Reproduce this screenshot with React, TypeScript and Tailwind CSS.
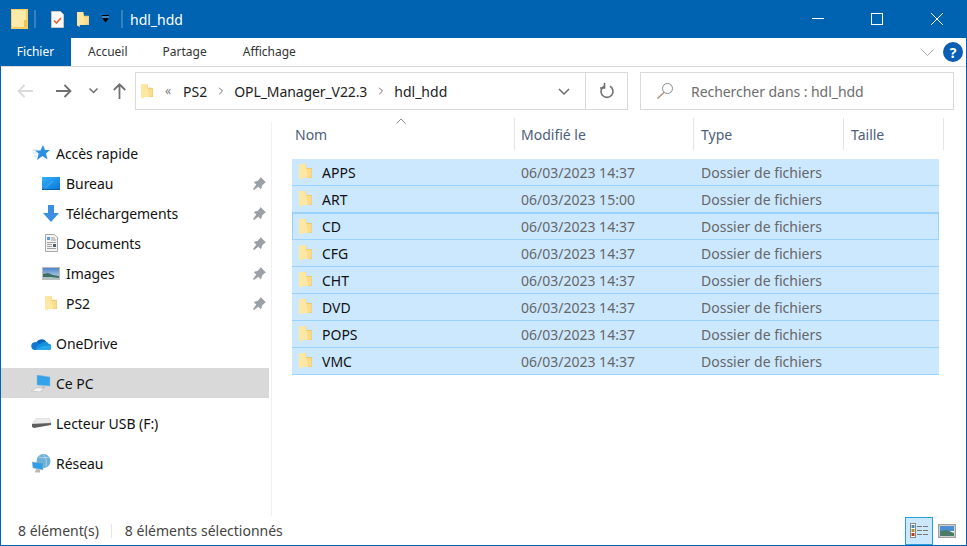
import { ChevronRight } from 'lucide-react';

const files = [
  { name: 'APPS', date: '06/03/2023 14:37' },
  { name: 'ART', date: '06/03/2023 15:00' },
  { name: 'CD', date: '06/03/2023 14:37', focused: true },
  { name: 'CFG', date: '06/03/2023 14:37' },
  { name: 'CHT', date: '06/03/2023 14:37' },
  { name: 'DVD', date: '06/03/2023 14:37' },
  { name: 'POPS', date: '06/03/2023 14:37' },
  { name: 'VMC', date: '06/03/2023 14:37' },
];

function FolderIcon({ className = 'w-[13px] h-[18px]' }: { className?: string }) {
  return (
    <svg viewBox="0 0 13 18" className={className}>
      <path d="M1 1h6l.5 4H13v10H8z" fill="#efc967" />
      <path d="M7 6h5.500v8.500H8z" fill="#f9dc8c" />
      <path d="M0 1h6.500L9 15H3v2L0 15.500z" fill="#fee7a2" />
    </svg>
  );
}

function PinIcon() {
  return (
    <svg viewBox="0 0 13 13" className="w-[13px] h-[13px]">
      <path d="M7.500 0L13 5.500l-1.300.4-2.700 2.600-.4 2.700-1 .8-2.200-2.300L1 13l-1-1 3.300-4.400L1 5.400l.8-1 2.700-.4L7.100 1.300z" fill="#9aa0a6" />
    </svg>
  );
}

function NavItem({ icon, label, pinned, active, indent }: { icon: React.ReactNode; label: string; pinned?: boolean; active?: boolean; indent?: boolean }) {
  return (
    <div className={`h-[30px] flex items-center ${active ? 'bg-[#d9d9d9]' : ''} ${indent ? 'pl-[40px]' : 'pl-[30px]'}`}>
      <div className="w-[20px] h-[20px] flex items-center justify-center shrink-0">{icon}</div>
      <span className="ml-[5px] text-[14px] tracking-[-0.05px] text-[#111]">{label}</span>
      {pinned && <div className="ml-auto mr-[3px]"><PinIcon /></div>}
    </div>
  );
}

function HeaderCell({ label, width, pad }: { label: string; width: string; pad: string }) {
  return (
    <div className={`${width} ${pad} h-[32px] flex items-center border-r border-[#e5e5e5] text-[14px] text-[#4c607a]`}>
      {label}
    </div>
  );
}

export default function App() {
  return (
    <div className="w-[967px] h-[546px] flex flex-col bg-white border-x border-b border-[#0063b1] overflow-hidden font-['Noto_Sans',sans-serif]">
      {/* title bar */}
      <div className="h-[38px] -mx-px bg-[#0063b1] flex items-center text-white shrink-0">
        <svg viewBox="0 0 17 20" className="ml-[11px] w-[17px] h-[20px]">
          <rect width="17" height="20" fill="#f7cf62" />
          <rect x="1" y="1" width="14" height="17" fill="#fdeaa8" />
          <rect x="13" y="11" width="3" height="7" fill="#f2c552" />
        </svg>
        <div className="ml-[6px] w-[2px] h-[18px] bg-[#3a80bf]" />
        <svg viewBox="0 0 13 17" className="ml-[15px] w-[13px] h-[17px]">
          <path d="M.5.500h9l3 3v13H.5z" fill="#fafafa" stroke="#c8c8c8" />
          <path d="M3 9.500l2.500 2.500L10 7" stroke="#e8602c" strokeWidth="1.600" fill="none" />
        </svg>
        <FolderIcon className="ml-[13px] w-[12px] h-[17px]" />
        <svg viewBox="0 0 7 8" className="ml-[13px] w-[7px] h-[8px]">
          <rect width="7" height="1" fill="#000" />
          <path d="M0 3h7L3.500 7.500z" fill="#000" />
          <path d="M0 2h7" stroke="#fff" strokeWidth=".5" />
        </svg>
        <div className="ml-[12px] w-[2px] h-[18px] bg-[#3a80bf]" />
        <span className="ml-[7px] text-[14px]">hdl_hdd</span>
        <div className="ml-auto flex items-center">
          <div className="w-[58px] flex justify-center">
            <svg viewBox="0 0 12 12" className="w-[12px] h-[12px]"><path d="M0 5.500h12" stroke="#fff" /></svg>
          </div>
          <div className="w-[59px] flex justify-center">
            <svg viewBox="0 0 12 12" className="w-[12px] h-[12px]"><rect x=".5" y=".5" width="11" height="11" fill="none" stroke="#fff" /></svg>
          </div>
          <div className="w-[61px] flex justify-center">
            <svg viewBox="0 0 12 12" className="w-[12px] h-[12px]"><path d="M0 0l12 12M12 0L0 12" stroke="#fff" /></svg>
          </div>
        </div>
      </div>

      {/* ribbon tabs */}
      <div className="h-[29px] -ml-px flex items-center border-b border-[#dadada] shrink-0 text-[12px] text-[#333]">
        <div className="w-[71px] h-full bg-[#0063b1] text-white flex items-center justify-center">Fichier</div>
        <span className="ml-[17px]">Accueil</span>
        <span className="ml-[35px]">Partage</span>
        <span className="ml-[36px]">Affichage</span>
        <svg viewBox="0 0 13 7" className="ml-auto w-[13px] h-[7px]"><path d="M.5.500l6 6 6-6" fill="none" stroke="#a6a6a6" /></svg>
        <div className="ml-[9px] mr-[3px] w-[20px] h-[20px] rounded-full bg-[#0a5fb4] text-white text-[14px] font-bold flex items-center justify-center">?</div>
      </div>

      {/* address row */}
      <div className="h-[55px] flex items-start pt-[5px] shrink-0">
        <div className="w-[134px] h-[38px] flex items-center">
          <svg viewBox="0 0 16 14" className="ml-[16px] w-[16px] h-[14px]"><path d="M16 7H1.500M7.500 1l-6 6 6 6" fill="none" stroke="#dadada" strokeWidth="1.800" /></svg>
          <svg viewBox="0 0 16 14" className="ml-[23px] w-[16px] h-[14px]"><path d="M0 7h14.500M8.500 1l6 6-6 6" fill="none" stroke="#707070" strokeWidth="1.800" /></svg>
          <svg viewBox="0 0 9 6" className="ml-[17px] w-[9px] h-[6px]"><path d="M.5.500l4 4 4-4" fill="none" stroke="#707070" strokeWidth="1.500" /></svg>
          <svg viewBox="0 0 13 16" className="ml-[15px] w-[13px] h-[16px]"><path d="M6.500 16V1.500M.8 7l5.700-5.700L12.200 7" fill="none" stroke="#707070" strokeWidth="1.800" /></svg>
        </div>
        <div className="w-[493px] h-[38px] border border-[#d9d9d9] flex items-center text-[14px] text-[#222]">
          <FolderIcon className="ml-[5px] w-[12px] h-[17px]" />
          <span className="ml-[12px] text-[12px] text-[#777]">«</span>
          <span className="ml-[12px]">PS2</span>
          <ChevronRight className="ml-[8px] w-[12px] h-[12px] text-[#707070]" />
          <span className="ml-[7px] tracking-[-0.1px]">OPL_Manager_V22.3</span>
          <ChevronRight className="ml-[8px] w-[12px] h-[12px] text-[#707070]" />
          <span className="ml-[7px]">hdl_hdd</span>
          <svg viewBox="0 0 12 7" className="ml-auto mr-[15px] w-[12px] h-[7px]"><path d="M1 1l5 5 5-5" fill="none" stroke="#707070" strokeWidth="1.500" /></svg>
          <div className="w-px h-full bg-[#d9d9d9]" />
          <div className="w-[41px] flex justify-center">
            <svg viewBox="0 0 16 16" className="w-[16px] h-[16px]">
              <path d="M5 3.200a6 6 0 1 0 6 0" fill="none" stroke="#707070" strokeWidth="1.600" />
              <path d="M5.500 0v5H1" fill="none" stroke="#707070" strokeWidth="1.600" />
            </svg>
          </div>
        </div>
        <div className="ml-[12px] w-[314px] h-[38px] border border-[#d9d9d9] flex items-center text-[14px] text-[#6d6d6d]">
          <svg viewBox="0 0 16 16" className="ml-[16px] w-[16px] h-[16px]">
            <circle cx="10.500" cy="5.500" r="5" fill="none" stroke="#8c8c8c" />
            <path d="M7 9.500L.5 15.500" stroke="#a58a70" strokeWidth="1.200" />
          </svg>
          <span className="ml-[18px] tracking-[-0.05px]">Rechercher dans : hdl_hdd</span>
        </div>
      </div>

      {/* content */}
      <div className="flex-1 flex min-h-0">
        <div className="w-[271px] h-full border-r border-[#f0f0f0] pt-[16px] shrink-0">
          <div className="w-[268px]">
            <NavItem
              label="Accès rapide"
              icon={
                <svg viewBox="0 0 18 16" className="w-[18px] h-[16px] ml-[-1px] overflow-visible">
                  <path d="M0 5h5M1 8h4M2 11h3" stroke="#bcdcf6" />
                  <path d="M11 0l2 5h5l-4 3.500 1.500 6L10.500 11 5 15l1.700-6.500L3 5.500h5.500z" fill="#2b8fe3" />
                </svg>
              }
            />
            <NavItem
              indent
              pinned
              label="Bureau"
              icon={
                <svg viewBox="0 0 18 13" className="w-[18px] h-[13px]">
                  <defs>
                    <linearGradient id="desk" x1="0" y1="0" x2="1" y2="1">
                      <stop offset="0" stopColor="#35b0fa" />
                      <stop offset="1" stopColor="#0a78d6" />
                    </linearGradient>
                  </defs>
                  <rect width="18" height="12" fill="url(#desk)" />
                  <path d="M3 11L11 4" stroke="#63c4fb" strokeWidth=".6" />
                  <rect y="12" width="18" height="1" fill="#0b5fa5" />
                </svg>
              }
            />
            <NavItem
              indent
              pinned
              label="Téléchargements"
              icon={<svg viewBox="0 0 16 17" className="w-[16px] h-[17px]"><path d="M5 0h6v8h5l-8 9-8-9h5z" fill="#3c8ee0" /></svg>}
            />
            <NavItem
              indent
              pinned
              label="Documents"
              icon={
                <svg viewBox="0 0 13 18" className="w-[13px] h-[18px]">
                  <path d="M.5.500h9l3 3v14H.5z" fill="#f4f4f4" stroke="#a8a8a8" />
                  <path d="M2 3h3v3H2z" fill="#5a9be0" />
                  <path d="M6 4h4M6 6h5M2 8.500h9M2 10.500h5M2 12.500h5M2 14.500h9" stroke="#8a8a8a" strokeWidth=".8" />
                  <rect x="8" y="10" width="3" height="3" fill="#506070" />
                </svg>
              }
            />
            <NavItem
              indent
              pinned
              label="Images"
              icon={
                <svg viewBox="0 0 18 13" className="w-[18px] h-[13px]">
                  <defs>
                    <linearGradient id="sky" x1="0" y1="0" x2="0" y2="1">
                      <stop offset="0" stopColor="#4d84c8" />
                      <stop offset="1" stopColor="#cfe0ea" />
                    </linearGradient>
                  </defs>
                  <rect width="18" height="13" fill="#bdbdbd" />
                  <rect x="1" y="1" width="16" height="11" fill="url(#sky)" />
                  <path d="M1 7l5-1 5 2 6 1v3H1z" fill="#3f6f62" />
                  <path d="M1 10l8 0 8 1v1H1z" fill="#a9c4c4" />
                </svg>
              }
            />
            <NavItem indent pinned label="PS2" icon={<FolderIcon className="w-[12px] h-[17px]" />} />
          </div>
          <div className="w-[268px] mt-[10px]">
            <NavItem
              label="OneDrive"
              icon={
                <svg viewBox="0 0 20 13" className="w-[20px] h-[13px]">
                  <path d="M5 8a5.500 5.500 0 0 1 10.500-2.500L12 10z" fill="#0364b8" />
                  <path d="M4 13a4 4 0 0 1-1-7.800 4 4 0 0 1 3.500.3L12 9l-3 4z" fill="#0f78d4" />
                  <path d="M4 13h13a3 3 0 0 0 1-6 5 5 0 0 0-6.500-1.500L7 8z" fill="#1490df" />
                  <path d="M4 13h13a3 3 0 0 0 2.600-4.500L12 9z" fill="#28a8ea" />
                </svg>
              }
            />
          </div>
          <div className="w-[268px] mt-[10px]">
            <NavItem
              active
              label="Ce PC"
              icon={
                <svg viewBox="0 0 20 17" className="w-[20px] h-[17px]">
                  <path d="M6 0l13 2v9L6 10z" fill="#35a3ea" stroke="#8fb8d4" strokeWidth=".5" />
                  <path d="M11 10.500l3 .5v2h-3z" fill="#bfc5c9" />
                  <path d="M0 16l6-3.500 7 1-4 3.500z" fill="#f3f3f3" stroke="#b0b0b0" strokeWidth=".5" />
                </svg>
              }
            />
          </div>
          <div className="w-[268px] mt-[10px]">
            <NavItem
              label="Lecteur USB (F:)"
              icon={
                <svg viewBox="0 0 19 10" className="w-[19px] h-[10px]">
                  <path d="M5 0h12l2 5L0 6z" fill="#ececec" stroke="#c4c4c4" strokeWidth=".5" />
                  <path d="M0 6l19-1v2L2 10 0 9z" fill="#5e5e5e" />
                </svg>
              }
            />
          </div>
          <div className="w-[268px] mt-[10px]">
            <NavItem
              label="Réseau"
              icon={
                <svg viewBox="0 0 19 19" className="w-[19px] h-[19px]">
                  <circle cx="11.500" cy="7" r="7" fill="#6cb0d6" />
                  <path d="M11 1c3 2 4 6 3 11M7 3c3 1 7 1 11 0" fill="none" stroke="#d5eaf5" strokeWidth=".6" />
                  <path d="M0 8l11 1v7L1 14z" fill="#2e9fe8" stroke="#b5b5b5" strokeWidth=".5" />
                  <path d="M4 15l4 .5v3H3z" fill="#b8b8b8" />
                </svg>
              }
            />
          </div>
        </div>

        <div className="flex-1 pl-[20px] relative min-w-0">
          <svg viewBox="0 0 10 6" className="absolute left-[124px] -top-[4px] w-[10px] h-[6px]"><path d="M.5 5.500L5 1l4.500 4.500" fill="none" stroke="#8a8a8a" /></svg>
          <div className="flex items-center -mt-[4px]">
            <HeaderCell label="Nom" width="w-[223px]" pad="pl-[3px]" />
            <HeaderCell label="Modifié le" width="w-[179px]" pad="pl-[6px]" />
            <HeaderCell label="Type" width="w-[150px]" pad="pl-[7px]" />
            <HeaderCell label="Taille" width="w-[100px]" pad="pl-[7px]" />
          </div>
          <div className="w-[647px] mt-[9px]">
            {files.map((f) => (
              <div
                key={f.name}
                className={`h-[27px] flex items-center bg-[#cce8ff] text-[14px] border-b border-[#99d1ff] ${f.focused ? 'border' : ''}`}
              >
                <FolderIcon className={f.focused ? 'ml-[6px] w-[13px] h-[18px]' : 'ml-[7px] w-[13px] h-[18px]'} />
                <span className="ml-[10px] w-[199px] text-[#111]">{f.name}</span>
                <span className="w-[180px] text-[#666]">{f.date}</span>
                <span className="text-[#666]">Dossier de fichiers</span>
              </div>
            ))}
          </div>
        </div>
      </div>

      {/* status bar */}
      <div className="h-[29px] shrink-0 flex items-center text-[14px] text-[#444]">
        <span className="ml-[17px]">8 élément(s)</span>
        <div className="ml-[12px] w-px h-[14px] bg-[#e5e5e5]" />
        <span className="ml-[13px]">8 éléments sélectionnés</span>
        <div className="ml-auto w-[28px] h-[28px] bg-[#cce8ff] border border-[#26a0da] flex items-center justify-center">
          <svg viewBox="0 0 18 15" className="w-[18px] h-[15px]">
            <rect x="0.500" y="0.500" width="5" height="14" fill="#fff" stroke="#888" />
            <rect x="1.500" y="2" width="3" height="3" fill="#4a8aa8" />
            <rect x="1.500" y="6" width="3" height="3" fill="#b09030" />
            <rect x="1.500" y="10" width="3" height="3" fill="#b04020" />
            <path d="M7 3.500h5M13 3.500h5M7 7.500h5M13 7.500h5M7 11.500h5M13 11.500h5" stroke="#777" />
          </svg>
        </div>
        <svg viewBox="0 0 18 14" className="ml-[5px] mr-[10px] w-[18px] h-[14px]">
          <rect x="0.750" y="0.750" width="16.500" height="12.500" fill="#fff" stroke="#a0a0a0" strokeWidth="1.500" />
          <rect x="2" y="2" width="14" height="5" fill="#4a8fd0" />
          <path d="M2 7l7-1 7 3v3H2z" fill="#4a7a68" />
        </svg>
      </div>
    </div>
  );
}
